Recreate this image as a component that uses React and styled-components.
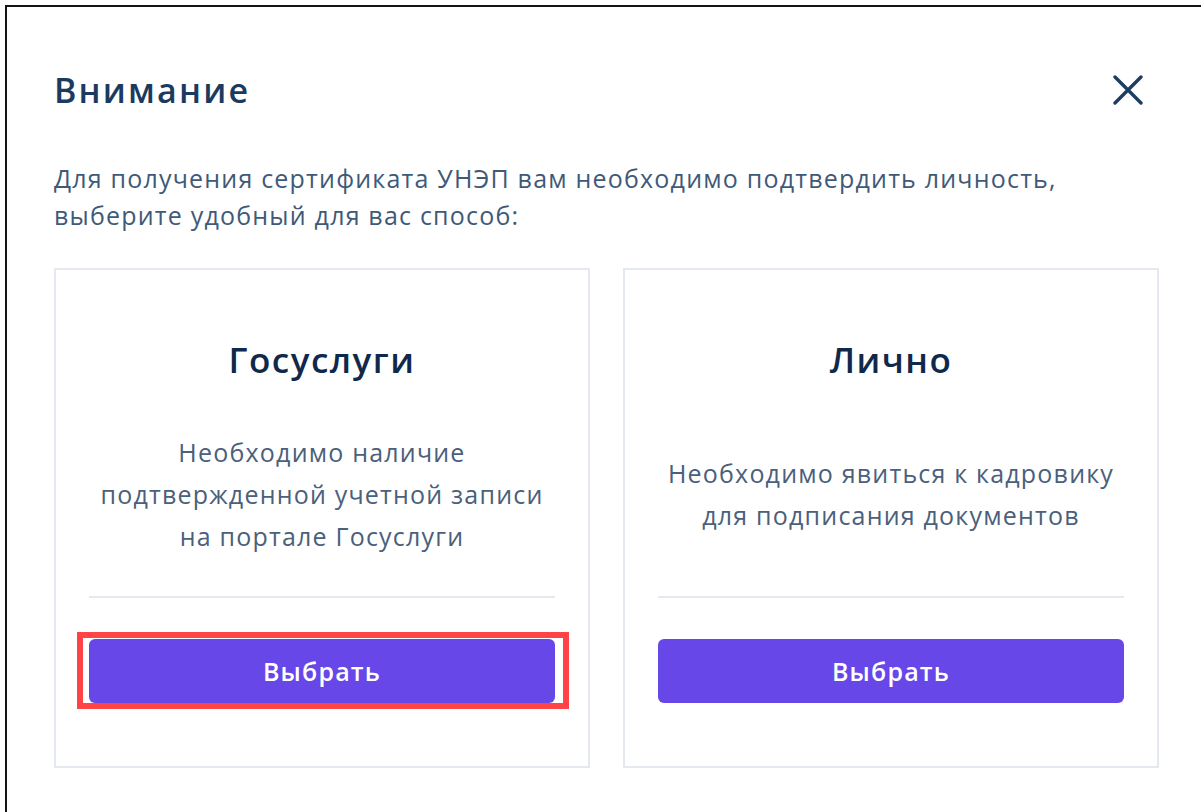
import styled, { createGlobalStyle } from "styled-components";

const GlobalStyle = createGlobalStyle`
  html, body {
    margin: 0;
    padding: 0;
    background: #ffffff;
  }
  body {
    font-family: "Open Sans", "Noto Sans", sans-serif;
    overflow: hidden;
  }
`;

const Frame = styled.div`
  margin: 5px 0 0 5px;
  height: 807px;
  box-sizing: border-box;
  border-top: 2px solid #141414;
  border-left: 2px solid #141414;
  padding: 63px 41px 0 47px;
  background: #ffffff;
`;

const Header = styled.div`
  display: flex;
  align-items: center;
  justify-content: space-between;
  padding-right: 17px;
`;

const Title = styled.h2`
  margin: 0;
  font-size: 34px;
  line-height: 40px;
  font-weight: 600;
  letter-spacing: 2.2px;
  color: #1b3a60;
`;

const CloseButton = styled.button`
  border: none;
  background: none;
  padding: 0;
  width: 30px;
  height: 30px;
  display: flex;
  cursor: pointer;
`;

const Intro = styled.p`
  margin: 50px 0 0;
  font-size: 25px;
  line-height: 37px;
  letter-spacing: 1.2px;
  color: #3f5a78;
`;

const Options = styled.div`
  display: grid;
  grid-template-columns: 536px 536px;
  gap: 33px;
  margin-top: 34px;
`;

const Card = styled.div`
  border: 2px solid #e4e9ef;
  padding: 68px 33px 63px;
  display: flex;
  flex-direction: column;
  align-items: stretch;
`;

const CardTitle = styled.h3`
  margin: 0;
  text-align: center;
  font-size: 35px;
  line-height: 44px;
  font-weight: 600;
  letter-spacing: 1.5px;
  color: #10294b;
`;

const CardText = styled.div`
  margin-top: 49px;
  height: 126px;
  display: flex;
  align-items: center;
  justify-content: center;
  text-align: center;
  font-size: 25px;
  line-height: 42px;
  letter-spacing: 1.2px;
  color: #4a607b;
`;

const Divider = styled.hr`
  margin: 39px 0 0;
  border: none;
  height: 2px;
  background: #e4e9ef;
`;

const ButtonWrap = styled.div`
  position: relative;
  margin-top: 41px;
`;

const SelectButton = styled.button`
  width: 100%;
  height: 64px;
  border: none;
  border-radius: 6px;
  background: #6847e9;
  color: #ffffff;
  font-family: "Open Sans", "Noto Sans", sans-serif;
  font-size: 25px;
  font-weight: 600;
  letter-spacing: 1.2px;
  cursor: pointer;
`;

const Highlight = styled.span`
  position: absolute;
  top: -7px;
  bottom: -6px;
  left: -12px;
  right: -14px;
  border: 6px solid #ff4347;
  pointer-events: none;
`;

const options = [
  {
    id: "gosuslugi",
    title: "Госуслуги",
    text: ["Необходимо наличие", "подтвержденной учетной записи", "на портале Госуслуги"],
    marked: true,
  },
  {
    id: "personal",
    title: "Лично",
    text: ["Необходимо явиться к кадровику", "для подписания документов"],
    marked: false,
  },
];

export default function App() {
  return (
    <>
      <GlobalStyle />
      <Frame>
        <Header>
          <Title>Внимание</Title>
          <CloseButton aria-label="Закрыть">
            <svg width="30" height="30" viewBox="0 0 30 30" fill="none">
              <path
                d="M2 2L28 28M28 2L2 28"
                stroke="#1f3d63"
                strokeWidth="3.4"
                strokeLinecap="round"
              />
            </svg>
          </CloseButton>
        </Header>
        <Intro>
          Для получения сертификата УНЭП вам необходимо подтвердить личность,
          <br />
          выберите удобный для вас способ:
        </Intro>
        <Options>
          {options.map((o) => (
            <Card key={o.id}>
              <CardTitle>{o.title}</CardTitle>
              <CardText>
                <div>
                  {o.text.map((line) => (
                    <div key={line}>{line}</div>
                  ))}
                </div>
              </CardText>
              <Divider />
              <ButtonWrap>
                <SelectButton>Выбрать</SelectButton>
                {o.marked && <Highlight />}
              </ButtonWrap>
            </Card>
          ))}
        </Options>
      </Frame>
    </>
  );
}
